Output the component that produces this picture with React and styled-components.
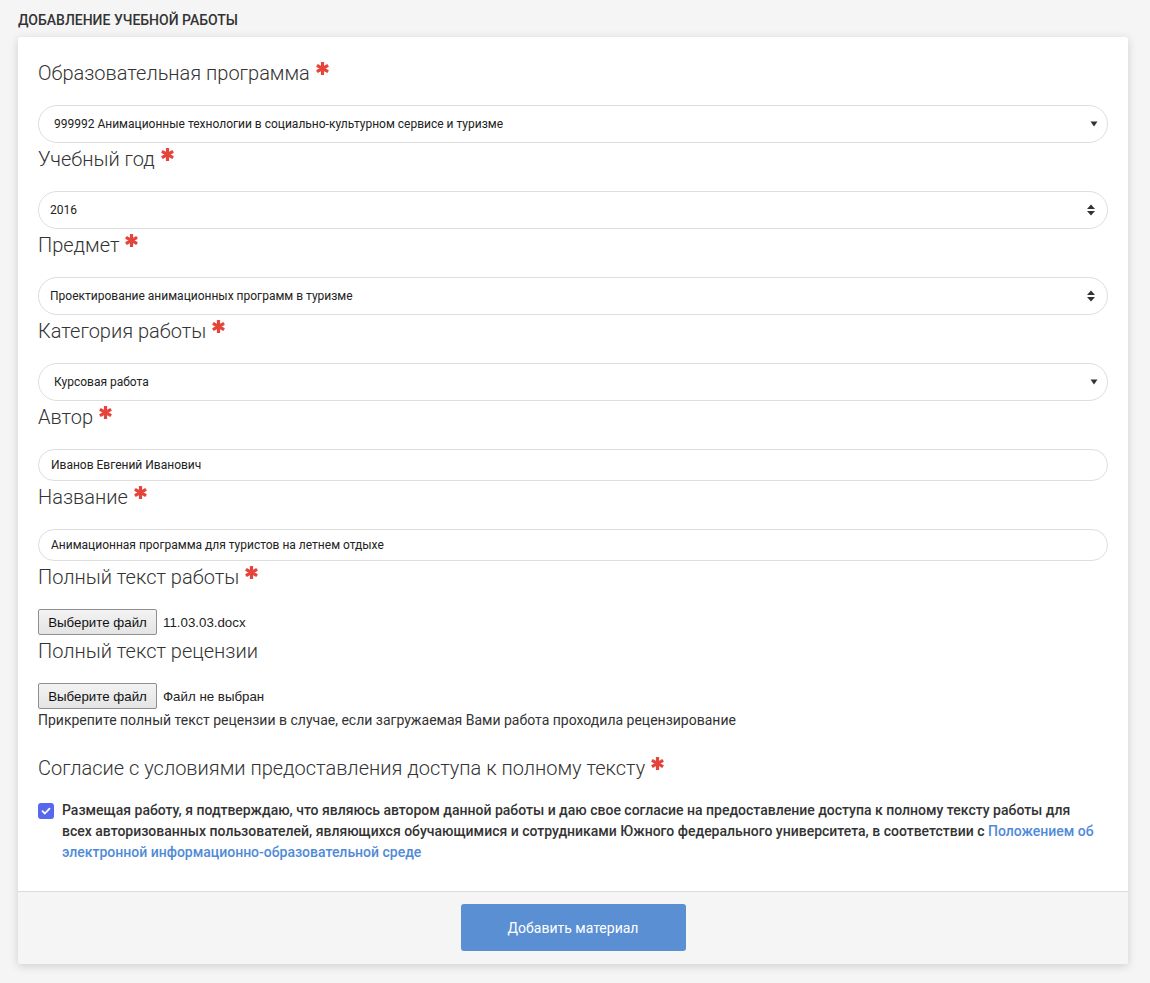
import React from "react";
import styled, { createGlobalStyle } from "styled-components";

const GlobalStyle = createGlobalStyle`
  body {
    margin: 0;
    background: #f5f5f5;
    font-family: Roboto, "Liberation Sans", Arial, sans-serif;
    color: #333;
  }
`;

const Page = styled.div`
  padding: 12px 22px 18px 18px;
`;

const PageTitle = styled.h1`
  margin: 0 0 9px;
  font-size: 14px;
  line-height: 16px;
  font-weight: 500;
  text-transform: uppercase;
  color: #333;
`;

const Card = styled.section`
  background: #fff;
  border-radius: 3px;
  box-shadow: 0 2px 10px rgba(0, 0, 0, 0.16);
  overflow: hidden;
`;

const CardBody = styled.div`
  padding: 20px 20px 28px;
`;

const Label = styled.div`
  display: flex;
  align-items: flex-start;
  font-size: 20px;
  font-weight: 300;
  line-height: 32px;
  color: #333;
  margin: ${(p) => (p.$spaced ? "22px 0 16px" : "0 0 16px")};
`;

const Star = styled.svg`
  width: 13px;
  height: 13px;
  margin: 5px 0 0 6px;
  flex: none;
`;

const Required = () => (
  <Star viewBox="0 0 13 13">
    <g fill="#e5443a" transform="translate(6.5 6.5)">
      <rect x="-1.6" y="-6.5" width="3.2" height="13" rx="0.6" />
      <rect x="-1.6" y="-6.5" width="3.2" height="13" rx="0.6" transform="rotate(60)" />
      <rect x="-1.6" y="-6.5" width="3.2" height="13" rx="0.6" transform="rotate(-60)" />
    </g>
  </Star>
);

const FieldLabel = ({ children, required, spaced }) => (
  <Label $spaced={spaced}>
    {children}
    {required && <Required />}
  </Label>
);

const SelectBox = styled.div`
  display: flex;
  align-items: center;
  justify-content: space-between;
  height: 38px;
  box-sizing: border-box;
  border: 1px solid #dedede;
  border-radius: 19px;
  padding: 0 9px 0 ${(p) => (p.$native ? "15px" : "11px")};
  font-size: 12px;
  color: #222;
  background: #fff;
`;

const Input = styled.div`
  display: flex;
  align-items: center;
  height: 32px;
  box-sizing: border-box;
  border: 1px solid #dedede;
  border-radius: 16px;
  padding: 0 12px;
  font-size: 12px;
  color: #222;
`;

const Caret = () => (
  <svg width="8" height="6" viewBox="0 0 8 6">
    <path d="M0.5 0.5h7L4 5.5z" fill="#333" />
  </svg>
);

const UpDown = () => (
  <svg width="10" height="12" viewBox="0 0 10 12" style={{ marginRight: 2 }}>
    <path d="M1 5h8L5 0.5z M1 7h8L5 11.5z" fill="#333" />
  </svg>
);

const Select = ({ value, native }) => (
  <SelectBox $native={native}>
    <span>{value}</span>
    {native ? <Caret /> : <UpDown />}
  </SelectBox>
);

const FileRow = styled.div`
  display: flex;
  align-items: center;
  gap: 6px;
  height: 26px;
  font-family: "Liberation Sans", Arial, sans-serif;
  font-size: 13.3px;
  color: #222;
`;

const FileButton = styled.button`
  height: 26px;
  width: 119px;
  padding: 0;
  border: 1px solid #8f8f8f;
  border-radius: 2px;
  background: linear-gradient(#f3f3f3, #e4e4e4);
  font-family: "Liberation Sans", Arial, sans-serif;
  font-size: 13.3px;
  color: #111;
`;

const Help = styled.p`
  margin: 1px 0 0;
  font-size: 14px;
  line-height: 20px;
  color: #333;
`;

const Consent = styled.div`
  display: flex;
  align-items: flex-start;
  gap: 8px;
  padding-right: 7px;
`;

const CheckBox = styled.span`
  flex: none;
  width: 16px;
  height: 16px;
  margin-top: 3px;
  border-radius: 3px;
  background: #5868ee;
  display: flex;
  align-items: center;
  justify-content: center;
`;

const ConsentText = styled.p`
  margin: 0;
  font-size: 14px;
  font-weight: 500;
  line-height: 21px;
  color: #333;
`;

const Link = styled.a`
  color: #4f8ad8;
  text-decoration: none;
`;

const Footer = styled.div`
  border-top: 1px solid #dcdcdc;
  background: #f5f5f5;
  padding: 12px 0 13px;
  display: flex;
  justify-content: center;
`;

const SubmitButton = styled.button`
  width: 225px;
  height: 47px;
  border: none;
  border-radius: 3px;
  background: #5b8fd3;
  color: #fff;
  font-family: Roboto, sans-serif;
  font-size: 14px;
`;

export default function App() {
  return (
    <Page>
      <GlobalStyle />
      <PageTitle>Добавление учебной работы</PageTitle>
      <Card>
        <CardBody>
          <FieldLabel required>Образовательная программа</FieldLabel>
          <Select native value="999992 Анимационные технологии в социально-культурном сервисе и туризме" />
          <FieldLabel required>Учебный год</FieldLabel>
          <Select value="2016" />
          <FieldLabel required>Предмет</FieldLabel>
          <Select value="Проектирование анимационных программ в туризме" />
          <FieldLabel required>Категория работы</FieldLabel>
          <Select native value="Курсовая работа" />
          <FieldLabel required>Автор</FieldLabel>
          <Input>Иванов Евгений Иванович</Input>
          <FieldLabel required>Название</FieldLabel>
          <Input>Анимационная программа для туристов на летнем отдыхе</Input>
          <FieldLabel required>Полный текст работы</FieldLabel>
          <FileRow>
            <FileButton>Выберите файл</FileButton>
            <span>11.03.03.docx</span>
          </FileRow>
          <FieldLabel>Полный текст рецензии</FieldLabel>
          <FileRow>
            <FileButton>Выберите файл</FileButton>
            <span>Файл не выбран</span>
          </FileRow>
          <Help>
            Прикрепите полный текст рецензии в случае, если загружаемая Вами работа проходила рецензирование
          </Help>
          <FieldLabel required spaced>
            Согласие с условиями предоставления доступа к полному тексту
          </FieldLabel>
          <Consent>
            <CheckBox>
              <svg width="10" height="8" viewBox="0 0 10 8">
                <path d="M1.5 4.2l2.4 2.3L8.5 1.6" fill="none" stroke="#fff" strokeWidth="1.8" strokeLinecap="round" strokeLinejoin="round" />
              </svg>
            </CheckBox>
            <ConsentText>
              Размещая работу, я подтверждаю, что являюсь автором данной работы и даю свое согласие на предоставление доступа к полному тексту работы для всех авторизованных пользователей, являющихся обучающимися и сотрудниками Южного федерального университета, в соответствии с{" "}
              <Link href="#">Положением об электронной информационно-образовательной среде</Link>
            </ConsentText>
          </Consent>
        </CardBody>
        <Footer>
          <SubmitButton>Добавить материал</SubmitButton>
        </Footer>
      </Card>
    </Page>
  );
}
